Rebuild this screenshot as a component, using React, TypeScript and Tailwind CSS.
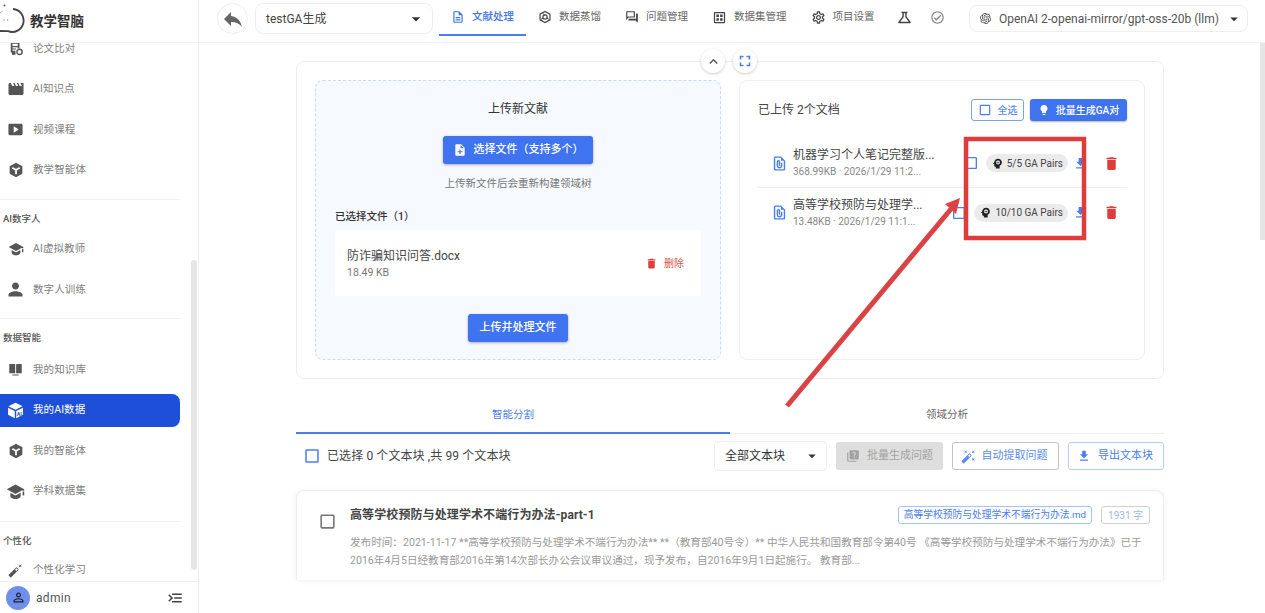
import type { ReactNode } from "react";
import {
    MdArrowDropDown,
    MdAutoFixHigh,
    MdAutoFixNormal,
    MdCheckBoxOutlineBlank,
    MdDelete,
    MdDownload,
    MdFullscreen,
    MdKeyboardArrowUp,
    MdLightbulb,
    MdMenuOpen,
    MdMovie,
    MdOutlineCheckCircle,
    MdOutlineDataset,
    MdOutlineDescription,
    MdOutlineFilePresent,
    MdOutlineQuestionAnswer,
    MdOutlineScience,
    MdOutlineSettings,
    MdPerson,
    MdPersonOutline,
    MdPsychology,
    MdQuiz,
    MdReply,
    MdSmartDisplay,
    MdNoteAdd,
} from "react-icons/md";
import { SiOpenai } from "react-icons/si";

// hexagon with a Y inside, used for the agent entries
const HexIcon = ({ className }: { className?: string }) => (
    <svg viewBox="0 0 24 24" className={className} fill="currentColor">
        <path d="M12 1 21.5 6.5v11L12 23l-9.5-5.5v-11z" />
        <path d="M6.5 8.5 12 12l5.5-3.5M12 12v6.5" stroke="#fff" strokeWidth="2.6" fill="none" />
    </svg>
);

const HexOutlineIcon = ({ className }: { className?: string }) => (
    <svg viewBox="0 0 24 24" className={className} fill="none" stroke="currentColor" strokeWidth="2">
        <path d="M12 2.5 20.5 7.2v9.6L12 21.5l-8.5-4.7V7.2z" />
        <circle cx="12" cy="12" r="3.6" />
        <path d="M12 8.4 8 6M15.2 13.8l4 2.5M8.8 13.8l-4 2.5" strokeWidth="1.4" />
    </svg>
);

const PaperIcon = ({ className }: { className?: string }) => (
    <svg viewBox="0 0 24 24" className={className} fill="currentColor">
        <path d="M3 0h15v11h-3V3H6v4h9v2H6v2h6v2H6v2h5v3H3z" />
        <path d="M5 17h6v5H5z" />
        <circle cx="18" cy="17" r="4.5" fill="none" stroke="currentColor" strokeWidth="2.4" />
    </svg>
);

const CubeAiIcon = ({ className }: { className?: string }) => (
    <svg viewBox="0 0 24 24" className={className} fill="currentColor">
        <path d="M12 1 22 6l-10 5L2 6z" />
        <path d="M1.5 8 11 12.8V23L1.5 18z" />
        <path d="M13 12.8 22.5 8v10L13 23z" />
        <text x="13.6" y="20" fontSize="7.5" fontWeight="700" fill="#1d4fd8">
            AI
        </text>
    </svg>
);

const BookIcon = ({ className }: { className?: string }) => (
    <svg viewBox="0 0 24 24" className={className} fill="currentColor">
        <path d="M2 3h8.5a1 1 0 0 1 1 1v14H2z" />
        <path d="M13 4a1 1 0 0 1 1-1h8v15h-9z" />
        <path d="M7 20h10v1.6H7z" />
    </svg>
);

const CapIcon = ({ className }: { className?: string }) => (
    <svg viewBox="0 0 24 24" className={className} fill="currentColor">
        <path d="M12 3 1 9l11 6 9-4.9V11h2V9z" />
        <path d="M5.5 13.6V18c0 1.6 3 3.5 6.500 3.500s6.500-1.900 6.500-3.500v-4.400L12 17.200z" />
        <path d="M21 12h2v5h-2z" />
    </svg>
);

const LogoIcon = () => (
    <svg viewBox="0 0 26 36" className="h-[36px] w-[26px]">
        <path d="M13 6A11.500 11.500 0 1 1 8 28.200L0 28" fill="none" stroke="#444" strokeWidth="1.800" />
        <path d="M0 10 2.500 8" stroke="#aaa" strokeWidth="1" />
        <circle cx="4.500" cy="2.500" r="1" fill="#3b5aa8" />
        <circle cx="4" cy="17" r="0.800" fill="#999" />
        <circle cx="7.500" cy="17" r="0.800" fill="#999" />
    </svg>
);

const NavItem = ({ icon, label, active }: { icon: ReactNode; label: string; active?: boolean }) => (
    <div
        className={`mr-[18px] flex h-[33px] items-center rounded-r-lg pl-[2px] text-[10.5px] ${
            active ? "bg-[#1d4fd8] text-white" : "text-[#808080]"
        }`}
    >
        <span className={`flex w-[27px] justify-center ${active ? "text-white" : "text-[#555]"}`}>{icon}</span>
        <span className="ml-[4px] tracking-[0.1px]">{label}</span>
    </div>
);

const NavDivider = () => <div className="mr-[18px] h-px bg-[#f0f0f0]" />;

const NavTitle = ({ children }: { children: string }) => (
    <div className="pl-[3px] text-[9.5px] leading-[14px] font-medium text-[#555]">{children}</div>
);

const Sidebar = () => (
    <aside className="relative flex h-[613px] w-[199px] shrink-0 flex-col border-r border-[#eeeeee] bg-white">
        <div className="relative z-10 flex h-[43px] shrink-0 items-center border-b border-[#f3f3f3] bg-white">
            <LogoIcon />
            <span className="ml-[4px] text-[13.5px] font-bold text-[#333]">教学智脑</span>
        </div>
        <div className="h-[538px] overflow-hidden">
            <div className="-mt-[11px]">
                <div className="flex flex-col gap-[7.5px]">
                    <NavItem icon={<PaperIcon className="h-[14px] w-[14px]" />} label="论文比对" />
                    <NavItem icon={<MdMovie className="h-[18px] w-[18px]" />} label="AI知识点" />
                    <NavItem icon={<MdSmartDisplay className="h-[17px] w-[17px]" />} label="视频课程" />
                    <NavItem icon={<HexIcon className="h-[16px] w-[16px]" />} label="教学智能体" />
                </div>
                <div className="mt-[12px]">
                    <NavDivider />
                </div>
                <div className="mt-[12px] mb-[7px]">
                    <NavTitle>AI数字人</NavTitle>
                </div>
                <div className="flex flex-col gap-[7.5px]">
                    <NavItem icon={<CapIcon className="h-[16px] w-[16px]" />} label="AI虚拟教师" />
                    <NavItem icon={<MdPerson className="h-[21px] w-[21px]" />} label="数字人训练" />
                </div>
                <div className="mt-[12px]">
                    <NavDivider />
                </div>
                <div className="mt-[12px] mb-[8px]">
                    <NavTitle>数据智能</NavTitle>
                </div>
                <div className="flex flex-col gap-[7.5px]">
                    <NavItem icon={<BookIcon className="h-[15px] w-[15px]" />} label="我的知识库" />
                    <NavItem icon={<CubeAiIcon className="h-[17px] w-[17px]" />} label="我的AI数据" active />
                    <NavItem icon={<HexIcon className="h-[16px] w-[16px]" />} label="我的智能体" />
                    <NavItem icon={<CapIcon className="h-[19px] w-[19px]" />} label="学科数据集" />
                </div>
                <div className="mt-[13px]">
                    <NavDivider />
                </div>
                <div className="mt-[12px] mb-[6px]">
                    <NavTitle>个性化</NavTitle>
                </div>
                <NavItem icon={<MdAutoFixNormal className="h-[15px] w-[15px]" />} label="个性化学习" />
            </div>
        </div>
        <div className="flex h-[32px] shrink-0 items-center border-t border-[#f0f0f0] pr-[14px] pl-[6px]">
            <div className="flex h-[24px] w-[24px] items-center justify-center rounded-full bg-[#6f8fec] text-[#222]">
                <MdPersonOutline className="h-[15px] w-[15px]" />
            </div>
            <span className="ml-[6px] flex-1 text-[12px] tracking-[0.3px] text-[#555]">admin</span>
            <MdMenuOpen className="h-[18px] w-[18px] scale-x-[-1] text-[#444]" />
        </div>
        {/* sidebar scrollbar */}
        <div className="absolute top-[260px] right-px h-[310px] w-[6px] rounded-full bg-[#e6e6e6]" />
    </aside>
);

const TopTab = ({ icon, label, active }: { icon: ReactNode; label: string; active?: boolean }) => (
    <div
        className={`flex h-[36px] items-center gap-[7px] border-b-2 px-[12px] text-[10.5px] ${
            active ? "border-[#4a7df0] font-medium text-[#3f73ea]" : "border-transparent text-[#666]"
        }`}
    >
        <span className={active ? "text-[#3f73ea]" : "text-[#444]"}>{icon}</span>
        {label}
    </div>
);

const Header = () => (
    <header className="flex h-[43px] shrink-0 items-start border-b border-[#f2f2f2] bg-white pl-[18px]">
        <div className="mt-[3px] flex h-[31px] w-[31px] items-center justify-center rounded-full border border-[#eeeeee] text-[#666]">
            <MdReply className="h-[24px] w-[24px]" />
        </div>
        <div className="mt-[3px] ml-[7px] flex h-[31px] w-[178px] items-center justify-between rounded-lg border border-[#eeeeee] pr-[6px] pl-[10px] text-[12px] text-[#444]">
            testGA生成
            <MdArrowDropDown className="h-[20px] w-[20px] text-[#333]" />
        </div>
        <nav className="ml-[6px] flex">
            <TopTab icon={<MdOutlineDescription className="h-[14px] w-[14px]" />} label="文献处理" active />
            <TopTab icon={<HexOutlineIcon className="h-[14px] w-[14px]" />} label="数据蒸馏" />
            <TopTab icon={<MdOutlineQuestionAnswer className="h-[14px] w-[14px]" />} label="问题管理" />
            <TopTab icon={<MdOutlineDataset className="h-[15px] w-[15px]" />} label="数据集管理" />
            <TopTab icon={<MdOutlineSettings className="h-[15px] w-[15px]" />} label="项目设置" />
        </nav>
        <div className="mt-[9px] ml-[9px] flex items-center gap-[17px] text-[#666]">
            <MdOutlineScience className="h-[17px] w-[17px] text-[#444]" />
            <MdOutlineCheckCircle className="h-[15px] w-[15px] text-[#888]" />
        </div>
        <div className="mt-[5px] mr-[17px] ml-auto flex h-[27px] w-[279px] items-center rounded-lg border border-[#eeeeee] pr-[4px] pl-[10px] text-[12px] text-[#555]">
            <SiOpenai className="mr-[8px] h-[11px] w-[11px] text-[#444]" />
            <span className="flex-1 whitespace-nowrap">OpenAI 2-openai-mirror/gpt-oss-20b (llm)</span>
            <MdArrowDropDown className="h-[18px] w-[18px] text-[#333]" />
        </div>
    </header>
);

const UploadPanel = () => (
    <div className="flex h-[280px] w-[406px] flex-col rounded-lg border border-dashed border-[#c9dcf7] bg-[#f6faff] px-[19px] pt-[19px]">
        <div className="text-center text-[12px] leading-[18px] text-[#333]">上传新文献</div>
        <button className="mx-auto mt-[18px] flex h-[28px] w-[150px] items-center justify-center gap-[7px] rounded-[3px] bg-[#3f73f0] text-[11px] font-medium text-white shadow-[0_1px_3px_rgba(0,0,0,0.3)]">
            <MdNoteAdd className="h-[14px] w-[14px]" />
            选择文件（支持多个）
        </button>
        <div className="mt-[12px] text-center text-[10.5px] leading-[15px] text-[#777]">上传新文件后会重新构建领域树</div>
        <div className="mt-[18px] text-[10.5px] leading-[16px] font-medium text-[#333]">已选择文件（1）</div>
        <div className="mt-[5px] flex h-[66px] items-center justify-between rounded-[3px] bg-white pr-[17px] pl-[12px]">
            <div>
                <div className="text-[12px] leading-[18px] text-[#444]">防诈骗知识问答.docx</div>
                <div className="text-[10.5px] leading-[15px] text-[#777]">18.49 KB</div>
            </div>
            <div className="flex items-center gap-[6px] text-[10px] text-[#d9534f]">
                <MdDelete className="h-[13px] w-[13px] text-[#e03c3c]" />
                删除
            </div>
        </div>
        <button className="mx-auto mt-[18px] flex h-[28px] w-[100px] items-center justify-center rounded-[3px] bg-[#3f73f0] text-[11px] font-medium text-white shadow-[0_1px_3px_rgba(0,0,0,0.3)]">
            上传并处理文件
        </button>
    </div>
);

const DocRow = ({ name, meta, pairs, divider }: { name: string; meta: string; pairs: string; divider?: boolean }) => (
    <div className={`flex h-[49px] items-center pl-[14px] ${divider ? "border-b border-[#eeeeee]" : ""}`}>
        <MdOutlineFilePresent className="h-[17px] w-[17px] shrink-0 text-[#4a7df0]" />
        <div className="ml-[5px] min-w-0">
            <div className="text-[12px] leading-[17px] whitespace-nowrap text-[#444]">{name}</div>
            <div className="text-[10px] leading-[15px] whitespace-nowrap text-[#888]">{meta}</div>
        </div>
        <div className="ml-auto flex items-center">
            <MdCheckBoxOutlineBlank className="h-[16px] w-[16px] text-[#4a7df0]" />
            <div className="ml-[7px] flex h-[18px] items-center gap-[3px] rounded-full bg-[#ebebeb] px-[5px] text-[10px] whitespace-nowrap text-[#444]">
                <MdPsychology className="h-[13px] w-[13px] text-[#222]" />
                {pairs}
            </div>
            <MdDownload className="ml-[5px] h-[15px] w-[15px] text-[#4a7df0]" />
            <MdDelete className="mr-[7px] ml-[15px] h-[17px] w-[17px] text-[#e03c3c]" />
        </div>
    </div>
);

const FilesPanel = () => (
    <div className="flex h-[280px] w-[406px] flex-col rounded-lg border border-[#eeeeee] bg-white px-[17px] pt-[17px]">
        <div className="flex h-[24px] items-center justify-between">
            <span className="ml-[1px] text-[12px] text-[#444]">已上传 2个文档</span>
            <div className="flex gap-[6px]">
                <button className="flex h-[22px] w-[53px] items-center justify-center gap-[6px] rounded-[3px] border border-[#7aa3ec] text-[10px] font-medium text-[#5a8bef]">
                    <MdCheckBoxOutlineBlank className="h-[14px] w-[14px] text-[#4a7df0]" />
                    全选
                </button>
                <button className="flex h-[22px] w-[97px] items-center justify-center gap-[6px] rounded-[3px] bg-[#3f73f0] text-[10px] font-medium text-white shadow-[0_1px_2px_rgba(0,0,0,0.3)]">
                    <MdLightbulb className="h-[12px] w-[12px]" />
                    批量生成GA对
                </button>
            </div>
        </div>
        <div className="mt-[17px]">
            <DocRow name="机器学习个人笔记完整版..." meta="368.99KB · 2026/1/29 11:2..." pairs="5/5 GA Pairs" divider />
            <DocRow name="高等学校预防与处理学..." meta="13.48KB · 2026/1/29 11:1..." pairs="10/10 GA Pairs" />
        </div>
    </div>
);

const Toolbar = () => (
    <div className="mt-[7px] flex h-[30px] items-center">
        <MdCheckBoxOutlineBlank className="ml-[7px] h-[18px] w-[18px] text-[#4a7df0]" />
        <span className="ml-[6px] text-[12px] tracking-[0.1px] text-[#444]">已选择 0 个文本块 ,共 99 个文本块</span>
        <div className="ml-auto flex h-[30px] w-[113px] items-center justify-between rounded-[4px] border border-[#eeeeee] pr-[5px] pl-[10px] text-[12px] text-[#333]">
            全部文本块
            <MdArrowDropDown className="h-[18px] w-[18px] text-[#333]" />
        </div>
        <button className="ml-[9px] flex h-[28px] w-[107px] items-center justify-center gap-[7px] rounded-[3px] bg-[#dedede] text-[11px] text-[#a3a3a3]">
            <MdQuiz className="h-[14px] w-[14px]" />
            批量生成问题
        </button>
        <button className="ml-[9px] flex h-[28px] w-[107px] items-center justify-center gap-[6px] rounded-[3px] border border-[#c4c4c4] pr-[3px] text-[11px] text-[#5a8bef]">
            <MdAutoFixHigh className="h-[15px] w-[15px] text-[#5a8bef]" />
            自动提取问题
        </button>
        <button className="ml-[9px] flex h-[28px] w-[96px] items-center justify-center gap-[7px] rounded-[3px] border border-[#b8cff5] pr-[2px] text-[11px] text-[#4a7df0]">
            <MdDownload className="h-[14px] w-[14px]" />
            导出文本块
        </button>
    </div>
);

const ChunkCard = () => (
    <div className="mt-[19px] h-[90px] overflow-hidden rounded-t-lg border border-b-0 border-[#eeeeee] shadow-[0_1px_6px_rgba(0,0,0,0.06)]">
        <div className="flex pt-[15px] pr-[13px] pl-[21px]">
            <MdCheckBoxOutlineBlank className="mt-[6px] h-[19px] w-[19px] shrink-0 text-[#777]" />
            <div className="ml-[13px] min-w-0 flex-1">
                <div className="flex h-[18px] items-center justify-between">
                    <span className="text-[12px] font-bold tracking-[0.1px] text-[#444]">高等学校预防与处理学术不端行为办法-part-1</span>
                    <div className="flex gap-[9px]">
                        <span className="flex h-[18px] items-center rounded-[3px] border border-[#a8c3f2] px-[5px] text-[9.75px] text-[#4a7df0]">
                            高等学校预防与处理学术不端行为办法.md
                        </span>
                        <span className="flex h-[18px] items-center rounded-[3px] border border-[#d0d0d0] px-[6px] text-[10px] text-[#9db8ea]">
                            1931 字
                        </span>
                    </div>
                </div>
                <p className="mt-[10px] text-[10.6px] leading-[18px] text-[#9a9a9a]">
                    发布时间：2021-11-17 **高等学校预防与处理学术不端行为办法** **（教育部40号令）** 中华人民共和国教育部令第40号 《高等学校预防与处理学术不端行为办法》已于 2016年4月5日经教育部2016年第14次部长办公会议审议通过，现予发布，自2016年9月1日起施行。 教育部...
                </p>
            </div>
        </div>
    </div>
);

const App = () => (
    <div className="relative flex h-[613px] w-[1265px] overflow-hidden bg-white font-['Roboto','Noto_Sans_CJK_SC',sans-serif]">
        <Sidebar />
        <main className="relative flex min-w-0 flex-1 flex-col">
            <Header />
            <div className="flex flex-col pt-[18px] pr-[101px] pl-[97px]">
                <div className="flex h-[318px] justify-between rounded-lg border border-[#eeeeee] p-[18px]">
                    <UploadPanel />
                    <FilesPanel />
                </div>
                <div className="mt-[16px] flex h-[39px] border-b border-[#eeeeee] text-[10.5px]">
                    <div className="flex h-[39px] w-1/2 items-center justify-center border-b-2 border-[#4a7df0] pt-[2px] text-[#4a7df0]">智能分割</div>
                    <div className="flex h-[38px] w-1/2 items-center justify-center pt-[2px] text-[#666]">领域分析</div>
                </div>
                <Toolbar />
                <ChunkCard />
            </div>
            {/* collapse and fullscreen buttons sit on the card edge */}
            <div className="absolute top-[49px] left-[502px] flex h-[24px] w-[24px] items-center justify-center rounded-full bg-white text-[#555] shadow-[0_1px_3px_rgba(0,0,0,0.2)]">
                <MdKeyboardArrowUp className="h-[17px] w-[17px]" />
            </div>
            <div className="absolute top-[49px] left-[534px] flex h-[24px] w-[24px] items-center justify-center rounded-full bg-white text-[#4a7df0] shadow-[0_1px_3px_rgba(0,0,0,0.2)]">
                <MdFullscreen className="h-[18px] w-[18px]" />
            </div>
            {/* page scrollbar */}
            <div className="absolute top-[43px] right-0 h-[197px] w-[5px] bg-[#e6e6e6]" />
        </main>
        {/* red annotation drawn over the screenshot */}
        <svg className="pointer-events-none absolute top-0 left-0 h-[613px] w-[1265px]" viewBox="0 0 1265 613">
            <rect x="966" y="139" width="118" height="99" fill="none" stroke="#e03c3c" strokeWidth="4.500" />
            <path d="M787 406 951 209" stroke="#d94343" strokeWidth="5" fill="none" />
            <path d="M960 198 945 204 956 214z" fill="#d94343" />
        </svg>
    </div>
);

export default App;
